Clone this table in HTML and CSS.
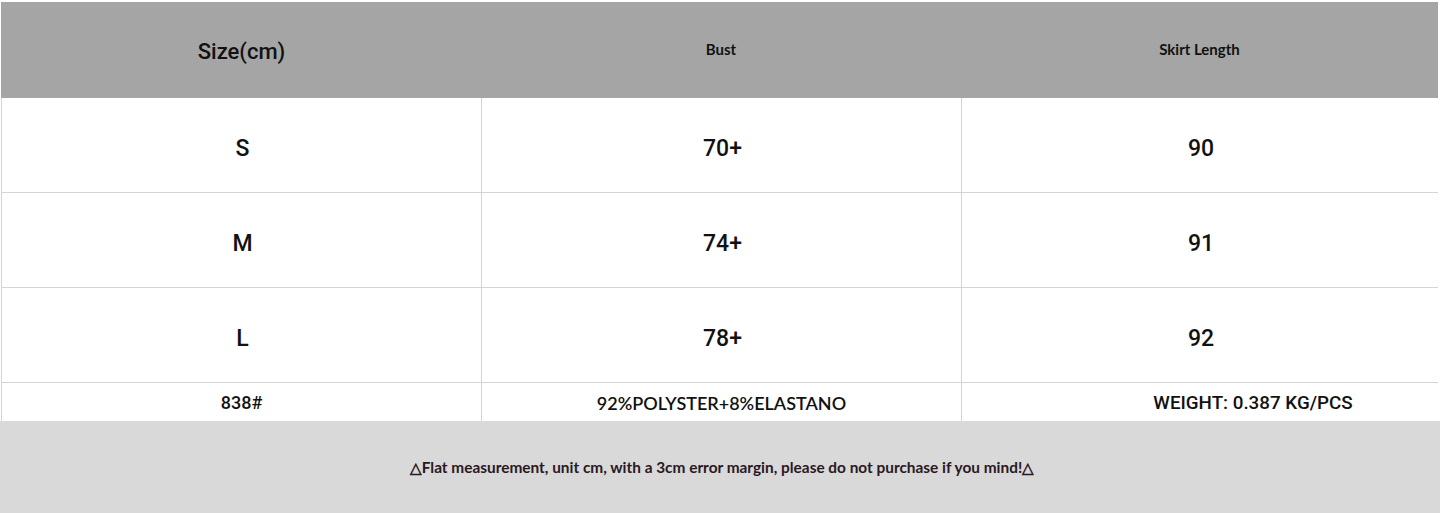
FILE: index.html
```html
<!DOCTYPE html>
<html>
<head>
<meta charset="utf-8">
<link rel="stylesheet" href="styles.css">
</head>
<body>
<div class="sheet">
  <div class="grid head">
    <div class="cell h-size">Size(cm)</div>
    <div class="cell h-lato">Bust</div>
    <div class="cell h-lato">Skirt Length</div>
  </div>
  <div class="grid row">
    <div class="cell val">S</div>
    <div class="cell val">70+</div>
    <div class="cell val">90</div>
  </div>
  <div class="grid row">
    <div class="cell val">M</div>
    <div class="cell val">74+</div>
    <div class="cell val">91</div>
  </div>
  <div class="grid row">
    <div class="cell val">L</div>
    <div class="cell val">78+</div>
    <div class="cell val">92</div>
  </div>
  <div class="grid info">
    <div class="cell small">838#</div>
    <div class="cell small lato">92%POLYSTER+8%ELASTANO</div>
    <div class="cell small weight">WEIGHT: 0.387 KG/PCS</div>
  </div>
  <div class="note">△Flat measurement, unit cm, with a 3cm error margin, please do not purchase if you mind!△</div>
</div>
</body>
</html>
```

FILE: styles.css
```css
html, body {
  margin: 0;
  padding: 0;
  background: #ffffff;
}
body {
  width: 1440px;
  height: 513px;
  overflow: hidden;
  font-family: Roboto, "Liberation Sans", Arial, sans-serif;
  color: #111;
}
.sheet {
  padding-top: 2px;
}
.grid {
  display: grid;
  grid-template-columns: 480px 480px 1fr;
  margin-left: 1px;
  width: 1437px;
}
.cell {
  display: flex;
  align-items: center;
  justify-content: center;
}
.head {
  height: 96px;
  background: #a5a5a5;
}
.h-size {
  font-size: 22px;
  font-weight: 500;
  padding-top: 3px;
  padding-left: 1px;
}
.h-lato {
  font-family: Lato, "Liberation Sans", sans-serif;
  font-weight: 700;
  font-size: 15px;
  padding-bottom: 2px;
}
.row {
  height: 95px;
  box-sizing: border-box;
  border-left: 1px solid #d4d4d4;
  border-bottom: 1px solid #d4d4d4;
}
.row .cell, .info .cell {
  border-right: 1px solid #d4d4d4;
}
.row .cell:last-child, .info .cell:last-child {
  border-right: 0;
}
.val {
  font-size: 23px;
  font-weight: 500;
  padding-top: 6px;
  padding-left: 2px;
}
.info {
  height: 38px;
  box-sizing: border-box;
  border-left: 1px solid #d4d4d4;
}
.small {
  font-size: 18px;
  font-weight: 500;
  padding-top: 1px;
}
.lato {
  font-family: Lato, "Liberation Sans", sans-serif;
  font-weight: 600;
  font-size: 18px;
}
.weight {
  font-size: 18.8px;
  padding-left: 106px;
}
.note {
  height: 93px;
  background: #d9d9d9;
  display: flex;
  align-items: center;
  justify-content: center;
  font-family: Lato, "Liberation Sans", sans-serif;
  font-weight: 700;
  font-size: 15.4px;
  color: #2a1823;
  padding-bottom: 1px;
  padding-left: 4px;
}
```
